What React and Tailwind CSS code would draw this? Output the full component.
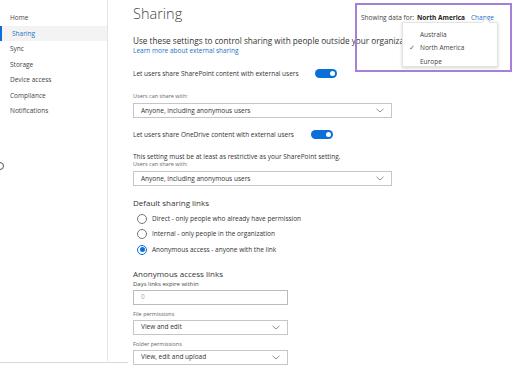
import { useState } from 'react'

const NAV = ['Home', 'Sharing', 'Sync', 'Storage', 'Device access', 'Compliance', 'Notifications']

function Chevron() {
  return (
    <svg width="8" height="5" viewBox="0 0 8 5" fill="none" stroke="#777" strokeWidth="0.8">
      <path d="M0.5 0.8 L4 4 L7.5 0.8" />
    </svg>
  )
}

function Select({ value, width = 'w-[259px]' }) {
  return (
    <div className={`${width} h-[15px] border border-[#c6c6c6] flex items-center justify-between pl-[7px] pr-[7px] text-[6.5px] text-[#333]`}>
      <span>{value}</span>
      <Chevron />
    </div>
  )
}

function Toggle() {
  return (
    <div className="w-[22px] h-[9px] rounded-full bg-[#0a6fd8] flex items-center justify-end pr-[2px]">
      <div className="w-[5px] h-[5px] rounded-full bg-white" />
    </div>
  )
}

function Radio({ label, checked }) {
  return (
    <div className="flex items-center gap-[5px] h-[15.5px] pl-[4px]">
      <div className={`w-[10px] h-[10px] rounded-full border flex items-center justify-center ${checked ? 'border-[#0a6fd8]' : 'border-[#777]'}`}>
        {checked && <div className="w-[5px] h-[5px] rounded-full bg-[#0a6fd8]" />}
      </div>
      <span className="text-[6.5px] text-[#333]">{label}</span>
    </div>
  )
}

export default function App() {
  const [active] = useState('Sharing')
  return (
    <div className="relative w-[520px] h-[367px] bg-white overflow-hidden" style={{ fontFamily: '"Open Sans", "Noto Sans", sans-serif' }}>
      <div className="flex h-[361px]">
        {/* Sidebar */}
        <div className="relative w-[108px] shrink-0 border-r border-[#e3e3e3] pt-[10px]">
          {NAV.map(n => (
            <div
              key={n}
              className={`h-[15.6px] flex items-center pl-[10px] text-[6.5px] ${n === active ? 'bg-[#f3f3f3] text-[#1a73c8] border-l-2 border-[#0a6fd8] pl-[8px]' : 'text-[#444]'}`}
            >
              {n}
            </div>
          ))}
          <div className="absolute left-[-4px] top-[162px] w-[8px] h-[8px] rounded-full border border-[#555]" />
        </div>

        {/* Main */}
        <div className="flex-1 pl-[25px] pt-[4px] text-[#333]">
          <h1 className="text-[14.5px] leading-[20px] font-light text-[#444]">Sharing</h1>
          <p className="mt-[12px] w-[269px] overflow-hidden text-[8.2px] leading-[10px] whitespace-nowrap text-[#333]">Use these settings to control sharing with people outside your organization.</p>
          <p className="text-[6.5px] leading-[9px] text-[#1a73c8]">Learn more about external sharing</p>

          <div className="mt-[13px] flex items-center h-[11px]">
            <span className="text-[6.5px] w-[182px]">Let users share SharePoint content with external users</span>
            <Toggle />
          </div>

          <p className="mt-[14px] text-[5.5px] leading-[7px] text-[#666]">Users can share with:</p>
          <div className="mt-[3px]"><Select value="Anyone, including anonymous users" /></div>

          <div className="mt-[11px] flex items-center h-[11px]">
            <span className="text-[6.5px] w-[178px]">Let users share OneDrive content with external users</span>
            <Toggle />
          </div>

          <p className="mt-[12px] text-[6.5px] leading-[9px]">This setting must be at least as restrictive as your SharePoint setting.</p>
          <p className="text-[5.5px] leading-[7px] text-[#666]">Users can share with:</p>
          <div className="mt-[3px]"><Select value="Anyone, including anonymous users" /></div>

          <p className="mt-[12px] text-[8px] leading-[10px] text-[#333]">Default sharing links</p>
          <div className="mt-[3px]">
            <Radio label="Direct - only people who already have permission" />
            <Radio label="Internal - only people in the organization" />
            <Radio label="Anonymous access - anyone with the link" checked />
          </div>

          <p className="mt-[11px] text-[8px] leading-[10px] text-[#333]">Anonymous access links</p>
          <p className="mt-[1px] text-[6px] leading-[8px] text-[#444]">Days links expire within</p>
          <div className="mt-[2px] w-[155px] h-[15px] border border-[#bbb] flex items-center pl-[7px] text-[6.5px] text-[#aaa]">0</div>

          <p className="mt-[6px] text-[5.5px] leading-[7px] text-[#666]">File permissions</p>
          <div className="mt-[2px]"><Select value="View and edit" width="w-[155px]" /></div>

          <p className="mt-[6px] text-[5.5px] leading-[7px] text-[#666]">Folder permissions</p>
          <div className="mt-[2px]"><Select value="View, edit and upload" width="w-[155px]" /></div>
        </div>
      </div>

      {/* bottom rule */}
      <div className="absolute left-0 top-[362px] w-[128px] h-px bg-[#d8d8d8]" />

      {/* Region selector, outlined */}
      <div className="absolute left-[355px] top-[3px] w-[157px] h-[69px] border-2 border-[#a77fd8]">
        <div className="pl-[4px] pt-[8px] text-[6.5px] leading-[9px] flex items-center whitespace-nowrap">
          <span className="text-[#444]">Showing data for:</span>
          <span className="ml-[3px] font-bold text-[#222]">North America</span>
          <span className="ml-[6px] text-[#1a73c8]">Change</span>
        </div>
      </div>

      {/* Dropdown menu */}
      <div className="absolute left-[402px] top-[22px] w-[96px] h-[45px] bg-white border border-[#e4e4e4] shadow-[0_1px_3px_rgba(0,0,0,0.18)] text-[6.5px] text-[#444]">
        <div className="absolute -top-[4px] left-[80px] w-[6px] h-[6px] bg-white border-l border-t border-[#e4e4e4] rotate-45" />
        <div className="pt-[5px]">
          <div className="h-[13.5px] flex items-center pl-[17px]">Australia</div>
          <div className="h-[13.5px] flex items-center pl-[6px]">
            <span className="w-[11px] text-[#666]">✓</span>North America
          </div>
          <div className="h-[13.5px] flex items-center pl-[17px]">Europe</div>
        </div>
      </div>
    </div>
  )
}
